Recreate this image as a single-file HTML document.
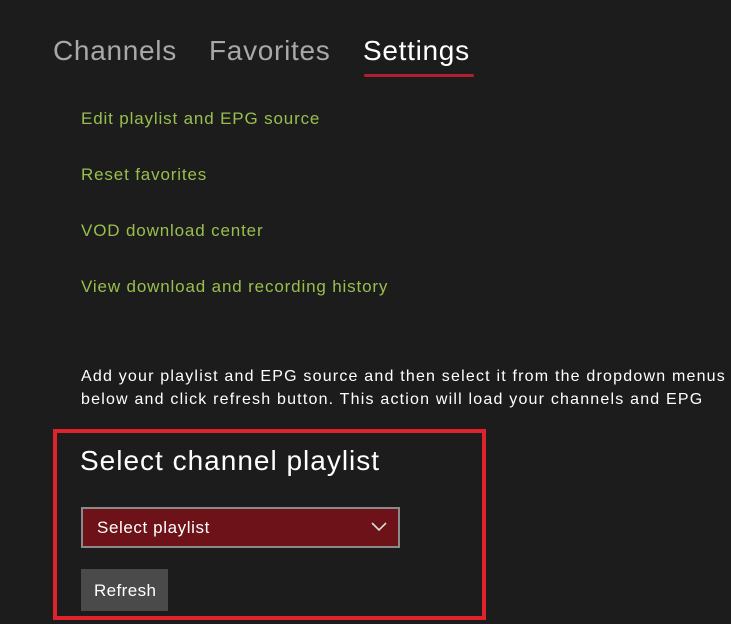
<!DOCTYPE html>
<html><head><style>
body{margin:0;width:731px;height:624px;background:#1c1c1c;font-family:"Liberation Sans",sans-serif;position:relative;overflow:hidden}
.a{position:absolute;white-space:nowrap}
.tab{font-size:28px;color:#a8a8a8;top:35px;letter-spacing:0.7px}
.lnk{font-size:17px;color:#98bf4e;left:81px;letter-spacing:0.85px}
.p{font-size:16px;color:#fff;left:81px;line-height:23px;top:365px;letter-spacing:1.2px}
</style></head><body>
<div class="a tab" style="left:53px">Channels</div>
<div class="a tab" style="left:209px">Favorites</div>
<div class="a tab" style="left:363px;color:#fff">Settings</div>
<div class="a" style="left:364px;top:74px;width:110px;height:3px;background:#b02030;border-radius:2px"></div>
<div class="a lnk" style="top:109px">Edit playlist and EPG source</div>
<div class="a lnk" style="top:165px">Reset favorites</div>
<div class="a lnk" style="top:221px">VOD download center</div>
<div class="a lnk" style="top:277px">View download and recording history</div>
<div class="a p">Add your playlist and EPG source and then select it from the dropdown menus<br>below and click refresh button. This action will load your channels and EPG</div>
<div class="a" style="left:53px;top:429px;width:425px;height:183px;border:4px solid #e0222c"></div>
<div class="a" style="left:80px;top:445px;font-size:28px;color:#fff;letter-spacing:1px">Select channel playlist</div>
<div class="a" style="left:81px;top:507px;width:315px;height:37px;background:#6c1218;border:2px solid #8a8a8a"></div>
<div class="a" style="left:97px;top:518px;font-size:17px;color:#fff;letter-spacing:0.6px">Select playlist</div>
<svg class="a" style="left:370px;top:521px" width="18" height="12"><path d="M2 2 L9 9 L16 2" fill="none" stroke="#ddd" stroke-width="1.6"/></svg>
<div class="a" style="left:81px;top:569px;width:87px;height:42px;background:#4a4a4a"></div>
<div class="a" style="left:94px;top:581px;font-size:17px;color:#fff;letter-spacing:0.4px">Refresh</div>
</body></html>
